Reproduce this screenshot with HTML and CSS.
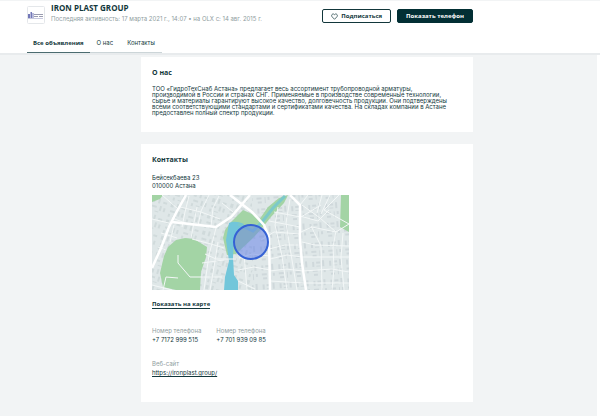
FILE: index.html
```html
<!DOCTYPE html>
<html lang="ru">
<head>
  <meta charset="UTF-8" />
  <meta name="viewport" content="width=device-width, initial-scale=1" />
  <title>IRON PLAST GROUP</title>
  <link rel="stylesheet" href="styles.css">
</head>
<body>

  <header class="header">
    <div class="header-grid">
      <div class="company">
        <svg class="logo" viewBox="0 0 18 18" aria-hidden="true">
          <rect x="0.5" y="0.5" width="17" height="17" rx="1" fill="#fff" stroke="#e4e7ea" />
          <path d="M1 8h2v4H1zM3.500 6h1.500v6H3.500zM5.500 7h1v5h-1z" fill="#7378b8" />
          <path d="M7 8.500h9M7 10.500h4M12 10.500h4" stroke="#9a9cb0" stroke-width="1.200" />
          <path d="M1 12.500h15" stroke="#b9bbd8" stroke-width="0.800" />
        </svg>
        <div class="company-info">
          <h1>IRON PLAST GROUP</h1>
          <p>Последняя активность: 17 марта 2021 г., 14:07 • на OLX с: 14 авг. 2015 г.</p>
        </div>
      </div>

      <div class="actions">
        <button type="button" class="btn btn-outline">
          <svg class="heart" viewBox="0 0 8 8" aria-hidden="true">
            <path d="M4 7.200 1.200 4.300C-0.400 2.400 2.200-0.300 4 1.900 5.800-0.300 8.400 2.400 6.800 4.300Z" fill="none" stroke="#12373b" stroke-width="0.800" />
          </svg>
          Подписаться
        </button>
        <button type="button" class="btn btn-dark">Показать телефон</button>
      </div>
    </div>

    <nav class="tabs">
      <a href="#ads" class="tab active">Все объявления</a>
      <a href="#about" class="tab">О нас</a>
      <a href="#contacts" class="tab">Контакты</a>
    </nav>
  </header>

  <main class="content">
    <div class="column">
      <section class="card" id="about">
        <h2>О нас</h2>
        <p class="about-text">
          ТОО «ГидроТехСнаб Астана» предлагает весь ассортимент трубопроводной арматуры,<br>
          производимой в России и странах СНГ. Применяемые в производстве современные технологии,<br>
          сырьё и материалы гарантируют высокое качество, долговечность продукции. Они подтверждены<br>
          всеми соответствующими стандартами и сертификатами качества. На складах компании в Астане<br>
          предоставлен полный спектр продукции.
        </p>
      </section>

      <section class="card contacts" id="contacts">
        <h2>Контакты</h2>
        <address>Бейсекбаева 23<br>010000 Астана</address>

        <svg class="map" viewBox="0 0 197 95" role="img" aria-label="Карта">
          <defs>
            <pattern id="houses" width="19" height="17" patternUnits="userSpaceOnUse" patternTransform="rotate(17)">
              <path d="M2 2h3v4H2zM8 1h2v5H8zM13 3h4v2h-4zM3 9h5v2H3zM11 8h2v5h-2zM15 9h2v4h-2zM2 13h2v3H2zM7 14h4v1H7z" fill="#d0dadb" />
            </pattern>
            <pattern id="blocks" width="17" height="19" patternUnits="userSpaceOnUse" patternTransform="rotate(-4)">
              <path d="M2 2h2v5H2zM6 2h4v2H6zM12 1h2v6h-2zM6 6h4v1H6zM2 10h5v2H2zM10 10h1v6h-1zM13 10h2v3h-2zM3 14h4v2H3z" fill="#cfd8db" />
            </pattern>
          </defs>
          <rect width="197" height="95" fill="#dfe7e8" />
          <path d="M0 0h100v95H0z" fill="url(#houses)" />
          <path d="M100 0h97v95h-97z" fill="url(#blocks)" />

          <!-- parks -->
          <g fill="#a3d4a5">
            <path d="M0 0h11L8 4 0 7z" />
            <path d="M8 78 12 61 16 52 24 45 33 43 42 44 55 52 54 62 49 77 48 95H24L11 92z" />
            <path d="M71 43 73 35 79 27 91 15 100 19 107 25 116 12 127 3 136 0 132 8 118 23 111 32 101 43 84 59 75 60z" />
            <path d="M189 0h8v37l-9-5z" />
          </g>

          <!-- river -->
          <path d="M77 28Q83 25 92 29L86 35 82 43 81 62 82 80 86 86V95H72L73 82 77 66 74 45z" fill="#72c6da" />
          <path d="M86 29 101 36 110 27 121 13 133 1" fill="none" stroke="#7cc9c9" stroke-width="3" />

          <!-- side streets -->
          <g fill="none" stroke="#f3f7f7" stroke-width="1">
            <path d="M0 24 21 29M10 0 26 14M20 23 36 29M37 1 33 17 30 32M45 12 39 43M57 0 49 16 46 31M28 12 49 17 68 24M67 1 61 13 59 31M70 8 81 17" />
            <path d="M9 38 25 43M6 52 14 55M22 30 18 47M40 44 59 49 72 53M64 33 57 60 52 95M66 47 62 72 58 95M50 68 72 65M53 59 64 64 84 64M48 82H70" />
            <path d="M26 60V68L38 82H48M11 95 14 82 26 83M0 90 20 95M87 63 100 59 118 61M86 75 102 72 118 75M86 86 103 94M92 59 95 95" />
            <path d="M109 45 122 37 148 39M117 54 133 50 149 50M118 64 135 60 150 62M118 76 134 74 151 76M118 86 152 88M126 12 123 30 130 61 135 95M138 4 134 28 137 47 145 95" />
            <path d="M122 17 149 22 169 10M117 26 148 32M150 10 168 23 184 37 197 29M156 0 148 10M170 0 165 18M178 0 169 19M148 21 166 26 177 15M187 0 172 15 197 29" />
            <path d="M149 37 160 32 184 37M150 47 163 50 197 51M150 62H197M151 76 180 74 197 77M153 88H197M159 31 169 51 170 95M184 36 181 52 182 73 180 95M191 38 189 62 192 95" />
          </g>

          <!-- main roads -->
          <g fill="none" stroke="#fff" stroke-width="2.500">
            <path d="M34 0 24 18 17 32 9 53 0 73" />
            <path d="M20 27 64 32 79 22 98 0" />
            <path d="M78 0 100 17 112 30 117 42 118 95" />
            <path d="M138 0 148 10 148 45 150 68 154 95" />
          </g>

          <circle cx="99" cy="47" r="17" fill="#6885e8" fill-opacity="0.550" stroke="#3562d5" stroke-width="2" />
        </svg>

        <a href="#map" class="map-link">Показать на карте</a>

        <dl class="details">
          <div>
            <dt>Номер телефона</dt>
            <dd>+7 7172 999 515</dd>
          </div>
          <div>
            <dt>Номер телефона</dt>
            <dd>+7 701 939 09 85</dd>
          </div>
        </dl>
        <dl class="details">
          <div>
            <dt>Веб-сайт</dt>
            <dd><a href="https://ironplast.group/">https://ironplast.group/</a></dd>
          </div>
        </dl>
      </section>
    </div>
  </main>

</body>
</html>
```
FILE: styles.css
```css
* {
  box-sizing: border-box;
}

body {
  margin: 0;
  font-family: Inter, "Open Sans", sans-serif;
  font-size: 6px;
  line-height: 8px;
  color: #12373b;
  background: #fff;
}

h1,
h2,
p,
dl,
dd {
  margin: 0;
}

a {
  color: inherit;
}

.header {
  padding: 2px 27px 0;
  border-top: 1px solid #f2f4f5;
  border-bottom: 2px solid #e8ebed;
}

.header-grid {
  display: flex;
  justify-content: space-between;
  align-items: flex-start;
  padding-right: 100px;
}

.company {
  display: flex;
  gap: 6px;
}

.logo {
  width: 18px;
  height: 18px;
  margin-top: 3px;
}

.company-info h1 {
  font-family: "Open Sans", sans-serif;
  font-size: 8px;
  line-height: 10px;
}

.company-info p {
  margin-top: 2px;
  color: #8f9da0;
  white-space: nowrap;
}

.actions {
  display: flex;
  gap: 6px;
  padding-top: 6px;
}

.btn {
  display: flex;
  align-items: center;
  justify-content: center;
  gap: 3px;
  height: 14px;
  padding: 0 8px;
  border: 1px solid #12373b;
  border-radius: 2px;
  font-family: "Open Sans", sans-serif;
  font-size: 6px;
  font-weight: 700;
  line-height: 8px;
  white-space: nowrap;
  cursor: pointer;
}

.btn-outline {
  background: #fff;
  color: #12373b;
}

.btn-dark {
  background: #022f34;
  border-color: #022f34;
  color: #fff;
}

.heart {
  width: 7px;
  height: 7px;
}

.tabs {
  display: flex;
  width: fit-content;
  margin-top: 15px;
}

.tab {
  height: 14px;
  padding: 0 7px;
  border-bottom: 1px solid #ccd5d8;
  text-decoration: none;
}

.tab.active {
  padding: 0 6px;
  border-color: #4c6c70;
  font-family: "Open Sans", sans-serif;
  font-weight: 700;
}

.content {
  display: grid;
  grid-template-columns: 114fr 332fr 100fr;
  margin-right: 3px;
  padding: 2px 24px 14px 27px;
  background: #f2f4f5;
}

.column {
  grid-column: 2;
  display: grid;
  gap: 12px;
}

.card {
  padding: 11px 11px 16px;
  background: #fff;
}

h2 {
  font-family: "Open Sans", sans-serif;
  font-size: 7px;
  line-height: 10px;
}

.about-text {
  margin-top: 8px;
  line-height: 6px;
  white-space: nowrap;
}

.contacts {
  padding-bottom: 24px;
}

address {
  margin-top: 9px;
  font-style: normal;
}

.map {
  display: block;
  width: 197px;
  max-width: 100%;
  margin-top: 5px;
}

.map-link {
  display: inline-block;
  margin-top: 10px;
  border-bottom: 1px solid #12373b;
  font-family: "Open Sans", sans-serif;
  font-weight: 700;
  text-decoration: none;
}

.details {
  display: flex;
  gap: 15px;
  margin-top: 15px;
}

.map-link + .details {
  margin-top: 18px;
}

.details dt {
  color: #8f9da0;
}

.details dd {
  line-height: 10px;
}
```
